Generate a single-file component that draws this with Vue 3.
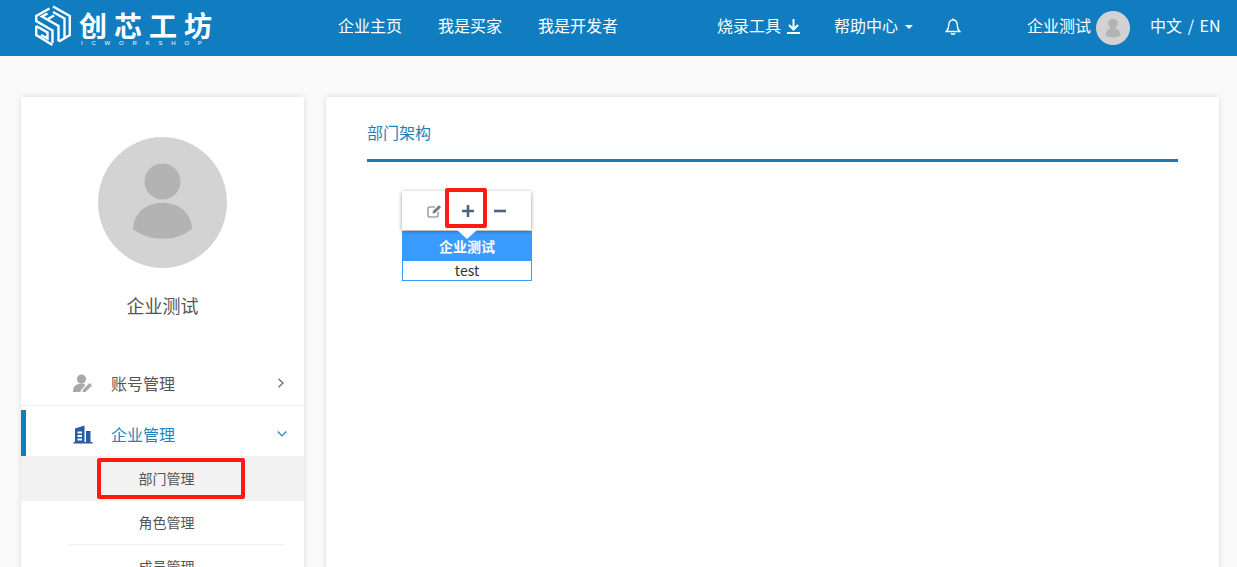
<script setup>
const nav = ['企业主页', '我是买家', '我是开发者']
</script>

<template>
  <div class="page">
    <header class="top">
      <div class="logo">
        <svg class="logo-mark" width="36" height="42" viewBox="0 0 36 42" fill="none" stroke="#fff" stroke-width="2.400">
          <path d="M18 1.500 L34.800 11 V30 L24 36.500" />
          <path d="M14.500 3.500 L1.200 11 V16 L17.500 25.500 V38" />
          <path d="M1.200 21 V30 L17.500 40 M1.200 21 L12.500 27.500 V33.500 L6 30" />
          <path d="M18 7 L29.500 13.500 V33.500" />
          <path d="M12.500 8.500 L7 11.500 L23.500 21 V36.500" />
          <path d="M13 14 L19 10.500" />
        </svg>
        <div class="logo-text">
          <div class="logo-cn">创芯工坊</div>
          <div class="logo-en">ICWORKSHOP</div>
        </div>
      </div>
      <nav class="nav-main">
        <a v-for="n in nav" :key="n">{{ n }}</a>
      </nav>
      <div class="nav-right">
        <a class="tool">烧录工具
          <svg width="15" height="16" viewBox="0 0 15 16" fill="none" stroke="#fff" stroke-width="2">
            <path d="M7.500 1 V11 M3 7 L7.500 11.500 L12 7" />
            <path d="M1 15 H14" />
          </svg>
        </a>
        <a class="help">帮助中心<span class="caret"></span></a>
        <svg class="bell" width="16" height="18" viewBox="0 0 16 18" fill="none" stroke="#fff" stroke-width="1.400">
          <path d="M8 2 C4.800 2 3.800 4.600 3.800 7 C3.800 10.500 2.800 12 1.300 13.500 H14.700 C13.200 12 12.200 10.500 12.200 7 C12.200 4.600 11.200 2 8 2 Z" />
          <path d="M6.200 15 C6.600 16.800 9.400 16.800 9.800 15" />
          <path d="M8 .6 V2" />
        </svg>
        <a class="user">企业测试</a>
        <svg class="mini-avatar" width="34" height="34" viewBox="0 0 34 34">
          <circle cx="17" cy="17" r="17" fill="#d2d2d2" />
          <circle cx="17" cy="12.500" r="4.800" fill="#b2b3b2" />
          <path d="M9.600 24.400 C10 14.600 24 14.600 24.400 24.400 C20 27 14 27 9.600 24.400 Z" fill="#b2b3b2" />
        </svg>
        <a class="lang">中文 / EN</a>
      </div>
    </header>

    <div class="body">
      <aside class="side">
        <svg class="avatar" width="129" height="131" viewBox="0 0 129 131">
          <ellipse cx="64.500" cy="65.500" rx="64" ry="65" fill="#d3d3d3" stroke="#bdbdbd" stroke-dasharray="1 1" />
          <circle cx="64.500" cy="44.500" r="18" fill="#b2b3b2" />
          <path d="M35 92 C36 57 93 57 94 92 C78 105 51 105 35 92 Z" fill="#b2b3b2" />
        </svg>
        <div class="company">企业测试</div>

        <div class="menu-row first">
          <svg class="menu-icon" width="20" height="19" viewBox="0 0 20 19" fill="#a9a9a9">
            <circle cx="8.500" cy="5" r="4.600" />
            <path d="M0 18 C0 12 3 10 8 9.500 C10 9.500 11.500 10 12.500 11 L8 16 L7.500 18 Z" />
            <path d="M9.500 18 L10 15.500 L16.500 9 L19 11.500 L12.500 18 Z" />
          </svg>
          <span class="label">账号管理</span>
          <svg class="chev" width="8" height="10" viewBox="0 0 8 10" fill="none" stroke="#666" stroke-width="1.200"><path d="M1.500 .8 L6 5 L1.500 9.200" /></svg>
        </div>
        <div class="menu-row active">
          <svg class="menu-icon" width="19" height="19" viewBox="0 0 19 19" fill="#2b5aa5">
            <path d="M1.500 17 V3.500 L11 .5 V17 Z M12.500 6 H17 V17 H12.500 Z" />
            <path d="M0 17 H19 V18.500 H0 Z" />
            <path d="M4 6.500 H8.500 V8.500 H4 Z M4 10 H8.500 V12 H4 Z M4 13.500 H8.500 V15.500 H4 Z" fill="#fff" />
          </svg>
          <span class="label">企业管理</span>
          <svg class="chev" width="10" height="8" viewBox="0 0 10 8" fill="none" stroke="#1d84c6" stroke-width="1.200"><path d="M.8 1.500 L5 5.800 L9.200 1.500" /></svg>
        </div>
        <div class="sub current">
          <span>部门管理</span>
          <i class="mark mark-side"></i>
        </div>
        <div class="sub divided"><span>角色管理</span></div>
        <div class="sub"><span>成员管理</span></div>
      </aside>

      <main class="card">
        <div class="card-title">部门架构</div>
        <div class="tree">
          <div class="toolbar">
            <svg class="t-edit" width="15" height="14" viewBox="0 0 15 14" fill="none" stroke="#6b7a8c" stroke-width="1.100">
              <path d="M11 8 V11.500 C11 12.300 10.400 13 9.500 13 H2.500 C1.600 13 1 12.300 1 11.500 V4.500 C1 3.600 1.600 3 2.500 3 H8" />
              <path d="M5.500 9.500 L6 7 L12 1.200 L14 3.200 L8 9 Z" fill="#6b7a8c" stroke="none" />
            </svg>
            <svg class="t-plus" width="12" height="12" viewBox="0 0 12 12" fill="#4d6480"><path d="M4.700 0 H7.300 V4.700 H12 V7.300 H7.300 V12 H4.700 V7.300 H0 V4.700 H4.700 Z" /></svg>
            <svg class="t-minus" width="12" height="12" viewBox="0 0 12 12" fill="#4d6480"><path d="M0 4.700 H12 V7.300 H0 Z" /></svg>
            <i class="mark mark-plus"></i>
            <i class="arrow"></i>
          </div>
          <div class="node">
            <div class="node-head">企业测试</div>
            <div class="node-body">test</div>
          </div>
        </div>
      </main>
    </div>
  </div>
</template>

<style>
html, body { margin: 0; background: #fafafa; }
</style>

<style scoped>
.page {
  height: 567px;
  overflow: hidden;
  background: #fafafa;
  font-family: "Noto Sans CJK SC", "Noto Sans", sans-serif;
  color: #555;
}
.top {
  height: 56px;
  background: #0f7dbf;
  color: #fff;
  display: flex;
  align-items: center;
  font-size: 16px;
  line-height: 22px;
}
.logo {
  width: 338px;
  padding-left: 35px;
  box-sizing: border-box;
  display: flex;
  align-items: center;
  gap: 8px;
  height: 56px;
  flex: none;
}
.logo-mark { margin-top: -5px; }
.logo-text { width: 134px; margin-top: -1px; }
.logo-cn {
  font-size: 28px;
  line-height: 30px;
  font-weight: 700;
  letter-spacing: 7px;
  white-space: nowrap;
}
.logo-en {
  font-family: "Liberation Sans", sans-serif;
  font-size: 6px;
  line-height: 6px;
  letter-spacing: 8.800px;
  padding-left: 2px;
  white-space: nowrap;
}
.nav-main { display: flex; gap: 36px; width: 379px; flex: none; padding-bottom: 6px; }
.nav-right { display: flex; align-items: center; flex: none; }
.tool { display: flex; align-items: center; gap: 5px; padding-bottom: 6px; }
.tool svg { margin-top: 1px; }
.help { margin-left: 33px; display: flex; align-items: center; padding-bottom: 6px; }
.caret {
  margin-left: 7px;
  margin-top: 3px;
  border-top: 4px solid #fff;
  border-left: 4px solid transparent;
  border-right: 4px solid transparent;
}
.bell { margin-left: 32px; margin-bottom: 2px; }
.user { margin-left: 66px; padding-bottom: 6px; }
.mini-avatar { margin-left: 5px; }
.lang { margin-left: 20px; word-spacing: 2px; padding-bottom: 6px; }

.body {
  display: flex;
  align-items: flex-start;
  gap: 22px;
  padding: 41px 18px 0 21px;
}
.side {
  width: 283px;
  height: 600px;
  flex: none;
  background: #fff;
  box-shadow: 0 0 6px rgba(0, 0, 0, .13);
  display: flex;
  flex-direction: column;
  align-items: stretch;
}
.avatar { display: block; margin: 40px 0 0 77px; }
.company {
  margin-top: 24px;
  text-align: center;
  font-size: 18px;
  line-height: 26px;
  color: #555;
}
.menu-row {
  display: flex;
  align-items: center;
  padding-left: 52px;
  font-size: 16px;
  position: relative;
  border-bottom: 1px solid #efefef;
}
.menu-row.first { margin-top: 43px; height: 44px; margin-bottom: 4px; }
.menu-icon { flex: none; width: 20px; }
.label { margin-left: 18px; width: 166px; flex: none; }
.chev { flex: none; }
.menu-row.active {
  height: 47px;
  box-sizing: border-box;
  padding-top: 2px;
  color: #1d84c6;
  box-shadow: inset 5px 0 0 #0f7dbf;
}
.sub {
  height: 44px;
  flex: none;
  font-size: 14px;
  color: #555;
  display: flex;
  align-items: center;
  justify-content: center;
  position: relative;
  padding: 0 0 2px 8px;
  box-sizing: border-box;
}
.sub.current { background: #f2f2f2; }
.sub.divided::after {
  content: "";
  position: absolute;
  left: 48px;
  right: 20px;
  bottom: 0;
  border-bottom: 1px solid #efefef;
}
.mark {
  position: absolute;
  border: 4px solid #ff1a12;
  border-radius: 2px;
  box-sizing: border-box;
  display: block;
}
.mark-side { left: 76px; top: 1px; width: 148px; height: 41px; }

.card {
  flex: 1;
  height: 600px;
  background: #fff;
  box-shadow: 0 0 6px rgba(0, 0, 0, .13);
  padding: 0 41px;
}
.card-title {
  height: 62px;
  border-bottom: 3px solid #1d78b8;
  color: #1d7fbe;
  font-size: 16px;
  line-height: 70px;
}
.tree {
  margin: 29px 0 0 35px;
  width: 130px;
}
.toolbar {
  height: 39px;
  width: 129px;
  background: #fff;
  box-shadow: 0 1px 4px rgba(0, 0, 0, .42);
  position: relative;
  z-index: 1;
  display: flex;
  align-items: center;
}
.t-edit { margin-left: 25px; }
.t-plus { margin-left: 20px; }
.t-minus { margin-left: 20px; }
.mark-plus { left: 43px; top: -3px; width: 42px; height: 40px; }
.arrow {
  position: absolute;
  left: 55px;
  top: 39px;
  border-top: 9px solid #fff;
  border-left: 10px solid transparent;
  border-right: 10px solid transparent;
}
.node {
  width: 130px;
  box-sizing: border-box;
  border: 1px solid #3a9bff;
  text-align: center;
  margin-top: 1px;
}
.node-head {
  height: 29px;
  background: #3a9bff;
  color: #fff;
  font-size: 14px;
  font-weight: 700;
  line-height: 28px;
}
.node-body {
  height: 19px;
  font-size: 14px;
  line-height: 19px;
  color: #333;
}
</style>
